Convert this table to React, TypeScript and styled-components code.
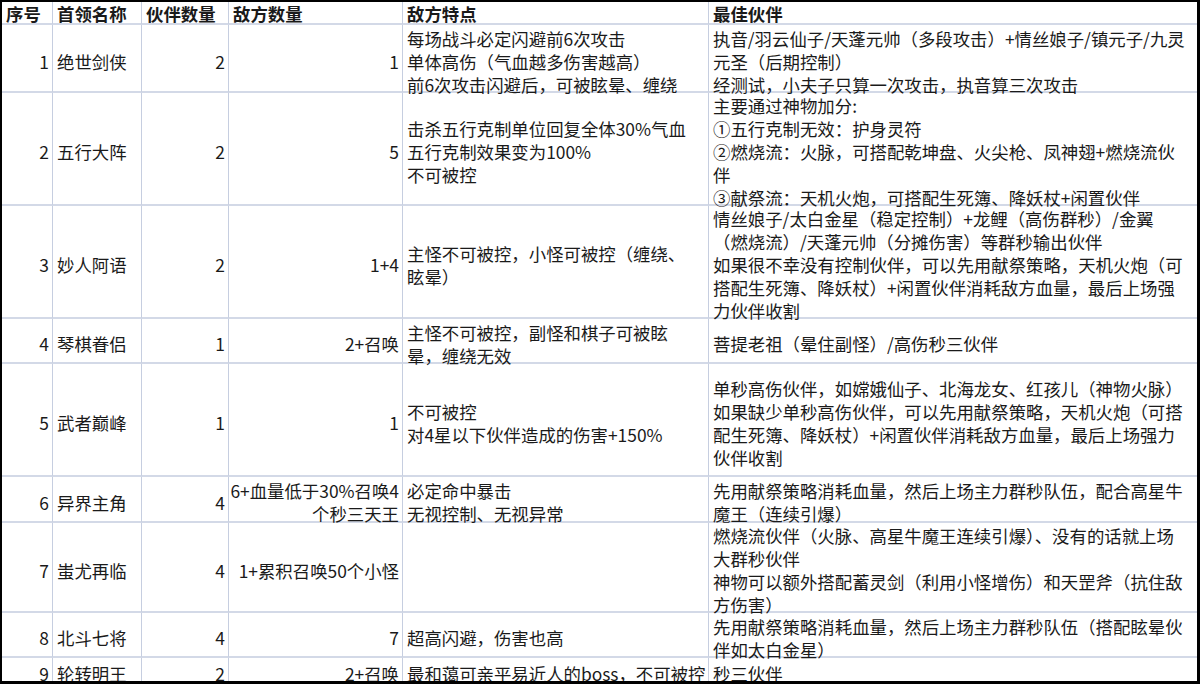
import React from "react";
import styled, { createGlobalStyle } from "styled-components";

const GlobalStyle = createGlobalStyle`
  html, body { margin: 0; padding: 0; background: #ffffff; }
  body { font-family: "Noto Sans CJK SC", "Noto Sans", sans-serif; }
`;

const Frame = styled.div`
  width: 1200px;
  height: 684px;
  box-sizing: border-box;
  border-style: solid;
  border-color: #000000;
  border-width: 2px 3px 3px 2px;
  overflow: hidden;
  background: #ffffff;
`;

const Sheet = styled.div`
  display: grid;
  grid-template-columns: 51px 89px 87px 174px 306px 1fr;
  grid-template-rows: 23px 68px 113px 113px 45px 113px 46px 90px 45px 26px;
  font-family: "Noto Sans CJK SC", sans-serif;
  font-size: 17.4px;
  line-height: 23px;
  color: #1a1a1a;
`;

type CellProps = { $align?: "left" | "right"; $last?: boolean };

const Cell = styled.div<CellProps>`
  box-sizing: border-box;
  display: flex;
  flex-direction: column;
  justify-content: center;
  align-items: ${(p) => (p.$align === "right" ? "flex-end" : "flex-start")};
  text-align: ${(p) => p.$align ?? "left"};
  padding: 6px 3px 0 4px;
  border-right: ${(p) => (p.$last ? "none" : "1px solid #c6cee0")};
  border-bottom: 2px solid #d3d9e7;
  min-width: 0;
`;

const HeaderCell = styled(Cell)`
  font-weight: 700;
  padding-top: 2px;
  line-height: 20px;
`;

const Line = styled.span`
  display: block;
  white-space: nowrap;
`;

type Row = {
  no: string;
  name: string;
  partners: string;
  enemies: string[];
  traits: string[];
  best: string[];
};

const rows: Row[] = [
  {
    no: "1",
    name: "绝世剑侠",
    partners: "2",
    enemies: ["1"],
    traits: ["每场战斗必定闪避前6次攻击", "单体高伤（气血越多伤害越高）", "前6次攻击闪避后，可被眩晕、缠绕"],
    best: ["执音/羽云仙子/天蓬元帅（多段攻击）+情丝娘子/镇元子/九灵", "元圣（后期控制）", "经测试，小夫子只算一次攻击，执音算三次攻击"],
  },
  {
    no: "2",
    name: "五行大阵",
    partners: "2",
    enemies: ["5"],
    traits: ["击杀五行克制单位回复全体30%气血", "五行克制效果变为100%", "不可被控"],
    best: [
      "主要通过神物加分:",
      "①五行克制无效：护身灵符",
      "②燃烧流：火脉，可搭配乾坤盘、火尖枪、凤神翅+燃烧流伙",
      "伴",
      "③献祭流：天机火炮，可搭配生死簿、降妖杖+闲置伙伴",
    ],
  },
  {
    no: "3",
    name: "妙人阿语",
    partners: "2",
    enemies: ["1+4"],
    traits: ["主怪不可被控，小怪可被控（缠绕、", "眩晕）"],
    best: [
      "情丝娘子/太白金星（稳定控制）+龙鲤（高伤群秒）/金翼",
      "（燃烧流）/天蓬元帅（分摊伤害）等群秒输出伙伴",
      "如果很不幸没有控制伙伴，可以先用献祭策略，天机火炮（可",
      "搭配生死簿、降妖杖）+闲置伙伴消耗敌方血量，最后上场强",
      "力伙伴收割",
    ],
  },
  {
    no: "4",
    name: "琴棋眷侣",
    partners: "1",
    enemies: ["2+召唤"],
    traits: ["主怪不可被控，副怪和棋子可被眩", "晕，缠绕无效"],
    best: ["菩提老祖（晕住副怪）/高伤秒三伙伴"],
  },
  {
    no: "5",
    name: "武者巅峰",
    partners: "1",
    enemies: ["1"],
    traits: ["不可被控", "对4星以下伙伴造成的伤害+150%"],
    best: [
      "单秒高伤伙伴，如嫦娥仙子、北海龙女、红孩儿（神物火脉）",
      "如果缺少单秒高伤伙伴，可以先用献祭策略，天机火炮（可搭",
      "配生死簿、降妖杖）+闲置伙伴消耗敌方血量，最后上场强力",
      "伙伴收割",
    ],
  },
  {
    no: "6",
    name: "异界主角",
    partners: "4",
    enemies: ["6+血量低于30%召唤4", "个秒三天王"],
    traits: ["必定命中暴击", "无视控制、无视异常"],
    best: ["先用献祭策略消耗血量，然后上场主力群秒队伍，配合高星牛", "魔王（连续引爆）"],
  },
  {
    no: "7",
    name: "蚩尤再临",
    partners: "4",
    enemies: ["1+累积召唤50个小怪"],
    traits: [],
    best: [
      "燃烧流伙伴（火脉、高星牛魔王连续引爆）、没有的话就上场",
      "大群秒伙伴",
      "神物可以额外搭配蓄灵剑（利用小怪增伤）和天罡斧（抗住敌",
      "方伤害）",
    ],
  },
  {
    no: "8",
    name: "北斗七将",
    partners: "4",
    enemies: ["7"],
    traits: ["超高闪避，伤害也高"],
    best: ["先用献祭策略消耗血量，然后上场主力群秒队伍（搭配眩晕伙", "伴如太白金星）"],
  },
  {
    no: "9",
    name: "轮转明王",
    partners: "2",
    enemies: ["2+召唤"],
    traits: ["最和蔼可亲平易近人的boss，不可被控"],
    best: ["秒三伙伴"],
  },
];

const headers = ["序号", "首领名称", "伙伴数量", "敌方数量", "敌方特点", "最佳伙伴"];

const Lines = ({ items }: { items: string[] }) => (
  <>
    {items.map((t, i) => (
      <Line key={i}>{t}</Line>
    ))}
  </>
);

export default function App() {
  return (
    <>
      <GlobalStyle />
      <Frame>
        <Sheet>
          {headers.map((h, i) => (
            <HeaderCell key={h} $last={i === headers.length - 1}>
              <Line>{h}</Line>
            </HeaderCell>
          ))}
          {rows.map((r) => (
            <React.Fragment key={r.no}>
              <Cell $align="right">
                <Line>{r.no}</Line>
              </Cell>
              <Cell>
                <Line>{r.name}</Line>
              </Cell>
              <Cell $align="right">
                <Line>{r.partners}</Line>
              </Cell>
              <Cell $align="right">
                <Lines items={r.enemies} />
              </Cell>
              <Cell>
                <Lines items={r.traits} />
              </Cell>
              <Cell $last>
                <Lines items={r.best} />
              </Cell>
            </React.Fragment>
          ))}
        </Sheet>
      </Frame>
    </>
  );
}
